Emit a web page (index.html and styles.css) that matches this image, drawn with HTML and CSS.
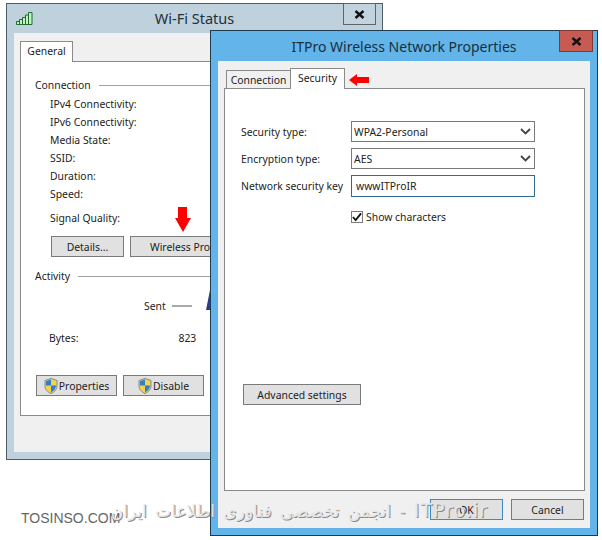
FILE: index.html
```html
<!DOCTYPE html>
<html lang="en">
<head>
    <meta charset="UTF-8">
    <meta name="viewport" content="width=device-width, initial-scale=1.0">
    <title>Wi-Fi Status</title>
    <link rel="stylesheet" href="styles.css">
</head>
<body>
    <!-- back window -->
    <div class="window status-window">
        <div class="titlebar">
            <svg class="signal-icon" width="17" height="13" viewBox="0 0 17 13">
                <path d="M.5 9.5h3v3h-3zM3.5 7.5h3v5h-3zM6.5 5.5h3v7h-3zM9.5 3h3v9.500h-3zM12.500.5h3.500v12h-3.500z" fill="#c4f2c0" stroke="#1f6b2a"/>
            </svg>
            <span class="title">Wi-Fi Status</span>
            <span class="close-btn plain">
                <svg width="11" height="9" viewBox="0 0 11 9"><path d="M1.500 1l8 7M9.500 1l-8 7" stroke="#111" stroke-width="2.400"/></svg>
            </span>
        </div>
        <div class="window-body">
            <div class="tabs">
                <span class="tab tab-general">General</span>
            </div>
            <div class="panel status-panel">
                <div class="group-head">Connection</div>
                <ul class="info-rows">
                    <li>IPv4 Connectivity:</li>
                    <li>IPv6 Connectivity:</li>
                    <li>Media State:</li>
                    <li>SSID:</li>
                    <li>Duration:</li>
                    <li>Speed:</li>
                </ul>
                <div class="signal-row">Signal Quality:</div>
                <div class="btn-row">
                    <button class="btn btn-details">Details...</button>
                    <button class="btn btn-wireless">Wireless Properties</button>
                </div>
                <div class="group-head activity-head">Activity</div>
                <div class="sent-row">
                    <span>Sent</span>
                    <span class="sent-dash"></span>
                    <svg class="net-icon" width="5" height="20" viewBox="0 0 5 20"><path d="M4 0L5 0V20H0z" fill="#2c3a92"/></svg>
                </div>
                <div class="bytes-row">
                    <span>Bytes:</span>
                    <span class="bytes-num">823</span>
                </div>
                <div class="btn-row action-row">
                    <button class="btn btn-action">
                        <svg class="shield" width="14" height="16" viewBox="0 0 14 16">
                            <path d="M7 .5l6 2v5.500c0 3.500-2.500 6-6 7.500-3.500-1.500-6-4-6-7.500V2.500z" fill="#f4d34a" stroke="#7d8a96"/>
                            <path d="M7 1.500v6H2V3.200zM7 7.500h5c0 3-2 5.200-5 6.800z" fill="#2f7fd0"/>
                        </svg>Properties
                    </button>
                    <button class="btn btn-action">
                        <svg class="shield" width="14" height="16" viewBox="0 0 14 16">
                            <path d="M7 .5l6 2v5.500c0 3.500-2.500 6-6 7.500-3.500-1.500-6-4-6-7.500V2.500z" fill="#f4d34a" stroke="#7d8a96"/>
                            <path d="M7 1.500v6H2V3.200zM7 7.500h5c0 3-2 5.200-5 6.800z" fill="#2f7fd0"/>
                        </svg>Disable
                    </button>
                </div>
            </div>
        </div>
    </div>

    <svg class="arrow arrow-down" width="16" height="25" viewBox="0 0 16 25"><path d="M3 0h9v11h4L8 25 0 11h3z" fill="#f00"/></svg>

    <!-- front window -->
    <div class="window props-window">
        <div class="titlebar">
            <span class="title">ITPro Wireless Network Properties</span>
            <span class="close-btn red">
                <svg width="11" height="9" viewBox="0 0 11 9"><path d="M1.500 1l8 7M9.500 1l-8 7" stroke="#111" stroke-width="2.400"/></svg>
            </span>
        </div>
        <div class="window-body">
            <div class="tabs props-tabs">
                <span class="tab tab-off">Connection</span>
                <span class="tab tab-on">Security</span>
                <svg class="arrow-left" width="20" height="12" viewBox="0 0 20 12"><path d="M0 6l8-6v3h12v6H8v3z" fill="#f00"/></svg>
            </div>
            <div class="panel props-panel">
                <div class="form-grid">
                    <label>Security type:</label>
                    <div class="combo">
                        <select><option>WPA2-Personal</option></select>
                        <svg width="11" height="7" viewBox="0 0 11 7"><path d="M1 1l4.500 4.500L10 1" fill="none" stroke="#444" stroke-width="1.800"/></svg>
                    </div>
                    <label>Encryption type:</label>
                    <div class="combo">
                        <select><option>AES</option></select>
                        <svg width="11" height="7" viewBox="0 0 11 7"><path d="M1 1l4.500 4.500L10 1" fill="none" stroke="#444" stroke-width="1.800"/></svg>
                    </div>
                    <label>Network security key</label>
                    <input class="key-input" type="text" value="wwwITProIR">
                    <span></span>
                    <div class="check-row">
                        <span class="check-box">
                            <svg width="11" height="10" viewBox="0 0 11 10"><path d="M1 5l3 3.500L10 1" fill="none" stroke="#111" stroke-width="2"/></svg>
                        </span>
                        Show characters
                    </div>
                </div>
                <button class="btn btn-advanced">Advanced settings</button>
            </div>
            <div class="dialog-btns">
                <button class="btn btn-ok">OK</button>
                <button class="btn btn-cancel">Cancel</button>
            </div>
        </div>
    </div>

    <!-- watermark -->
    <div class="mark-left">TOSINSO.COM</div>
    <div class="mark-right" dir="rtl"><span class="mark-latin">ITPro.ir</span> - انجمن تخصصی فناوری اطلاعات ایران</div>
</body>
</html>
```

FILE: styles.css
```css
* {
    margin: 0;
    padding: 0;
    box-sizing: border-box;
    font-family: 'Noto Sans', sans-serif;
}

body {
    background: white;
    width: 602px;
    height: 540px;
    overflow: hidden;
    position: relative;
    font-size: 10.4px;
    color: #222;
}

/* Windows */
.window {
    position: absolute;
    display: flex;
    flex-direction: column;
    border: 1px solid #4e5c64;
}

.status-window {
    left: 6px;
    top: 3px;
    width: 377px;
    height: 457px;
    background: #bfd1dd;
}

.props-window {
    left: 210px;
    top: 30px;
    width: 388px;
    height: 506px;
    background: #63b4e8;
    border-color: #1d3c50;
}

.titlebar {
    height: 29px;
    display: flex;
    align-items: center;
    justify-content: center;
    position: relative;
    flex-shrink: 0;
}

.status-window .titlebar {
    padding-bottom: 2px;
}

.props-window .titlebar {
    height: 30px;
}

.title {
    font-size: 14px;
    color: #223038;
}

.status-window .title {
    font-size: 14.500px;
}

.props-window .title {
    color: #17303f;
}

.signal-icon {
    position: absolute;
    left: 9px;
    top: 8px;
}

.close-btn {
    position: absolute;
    top: -1px;
    height: 22px;
    display: flex;
    align-items: center;
    justify-content: center;
}

.close-btn.plain {
    right: 6px;
    width: 33px;
    border: 1px solid #5a666d;
    background: #c3d3de;
}

.close-btn.red {
    right: 4px;
    width: 34px;
    border: 1px solid #7c3a36;
    background: #c75b52;
}

.window-body {
    flex: 1;
    margin: 0 7px 7px;
    background: #f0f0f0;
    padding: 8px 6px 0;
    display: flex;
    flex-direction: column;
}

.props-window .window-body {
    padding-top: 7px;
}

/* Tabs */
.tabs {
    display: flex;
    align-items: flex-end;
    height: 21px;
    position: relative;
    z-index: 1;
    margin-bottom: -1px;
}

.tab {
    border: 1px solid #8a8a8a;
    display: flex;
    align-items: center;
    justify-content: center;
}

.tab-general {
    width: 53px;
    height: 21px;
    background: white;
    border-bottom: none;
    padding-bottom: 2px;
}

.props-tabs {
    padding-left: 2px;
}

.tab-off {
    width: 65px;
    height: 19px;
    background: #f0f0f0;
}

.tab-on {
    width: 55px;
    height: 21px;
    background: white;
    border-bottom: none;
    margin-left: -1px;
    padding-bottom: 3px;
}

.arrow-left {
    margin: 0 0 3px 4px;
}

.panel {
    background: white;
    border: 1px solid #8a8a8a;
}

/* Status panel */
.status-panel {
    height: 355px;
    width: 355px;
    padding: 15px 0 0 14px;
}

.group-head {
    display: flex;
    align-items: center;
    gap: 8px;
    height: 16px;
}

.group-head::after {
    content: "";
    flex: 1;
    height: 1px;
    background: #a0a0a0;
}

.info-rows {
    list-style: none;
    margin: 2px 0 0 15px;
}

.info-rows li {
    height: 18px;
    line-height: 18px;
}

.signal-row {
    margin: 6px 0 0 15px;
    height: 18px;
    line-height: 18px;
}

.btn-row {
    display: flex;
    gap: 6px;
    margin: 9px 0 0 16px;
}

.btn {
    height: 21px;
    font-size: 10.4px;
    color: #222;
    background: #e1e1e1;
    border: 1px solid #7a7a7a;
    display: flex;
    align-items: center;
    justify-content: center;
}

.btn-details {
    width: 73px;
}

.btn-wireless {
    width: 134px;
}

.activity-head {
    margin-top: 11px;
}

.sent-row {
    display: flex;
    align-items: center;
    height: 18px;
    margin: 13px 0 0 109px;
    gap: 6px;
}

.sent-dash {
    width: 20px;
    height: 2px;
    background: #aaa;
}

.net-icon {
    margin: 0 0 13px 8px;
}

.bytes-row {
    display: flex;
    height: 18px;
    line-height: 18px;
    margin: 14px 0 0 14px;
}

.bytes-num {
    margin-left: 100px;
}

.action-row {
    margin: 28px 0 0 1px;
}

.btn-action {
    width: 81px;
    gap: 1px;
}

.arrow {
    position: absolute;
}

.arrow-down {
    left: 175px;
    top: 207px;
}

/* Properties panel */
.props-panel {
    width: 361px;
    height: 403px;
    padding: 32px 0 0 16px;
}

.form-grid {
    display: grid;
    grid-template-columns: 110px 184px;
    grid-template-rows: 21px 21px 22px auto;
    row-gap: 6px;
    align-items: center;
}

.combo {
    position: relative;
    height: 21px;
}

.combo select {
    appearance: none;
    width: 100%;
    height: 100%;
    border: 1px solid #7a7a7a;
    background: white;
    font-size: 10.4px;
    color: #222;
    padding-left: 2px;
}

.combo svg {
    position: absolute;
    right: 4px;
    top: 7px;
}

.key-input {
    height: 22px;
    border: 1px solid #2f6c92;
    font-size: 10.4px;
    color: #222;
    padding-left: 4px;
}

.check-row {
    display: flex;
    align-items: center;
    gap: 3px;
    margin-top: 7px;
}

.check-box {
    width: 12px;
    height: 12px;
    border: 1px solid #7a7a7a;
    display: flex;
    align-items: center;
    justify-content: center;
}

.btn-advanced {
    width: 118px;
    margin: 160px 0 0 2px;
}

.dialog-btns {
    display: flex;
    justify-content: flex-end;
    gap: 8px;
    margin-top: 8px;
}

.btn-ok,
.btn-cancel {
    width: 73px;
    height: 21px;
}

.btn-ok {
    border-color: #3f8ac0;
}

/* Watermark */
.mark-left {
    position: absolute;
    left: 21px;
    top: 510px;
    font-family: 'Liberation Sans', sans-serif;
    font-size: 14px;
    color: #666;
}

.mark-right {
    position: absolute;
    left: 100px;
    width: 388px;
    top: 499px;
    font-family: 'DejaVu Sans', sans-serif;
    font-size: 17px;
    word-spacing: 3px;
    color: #e6e6e6;
    text-shadow: 1px 1px 0 #8a8a8a;
    white-space: nowrap;
}

.mark-latin {
    font-family: 'DejaVu Sans', sans-serif;
    font-size: 19px;
    letter-spacing: 1px;
}
```
